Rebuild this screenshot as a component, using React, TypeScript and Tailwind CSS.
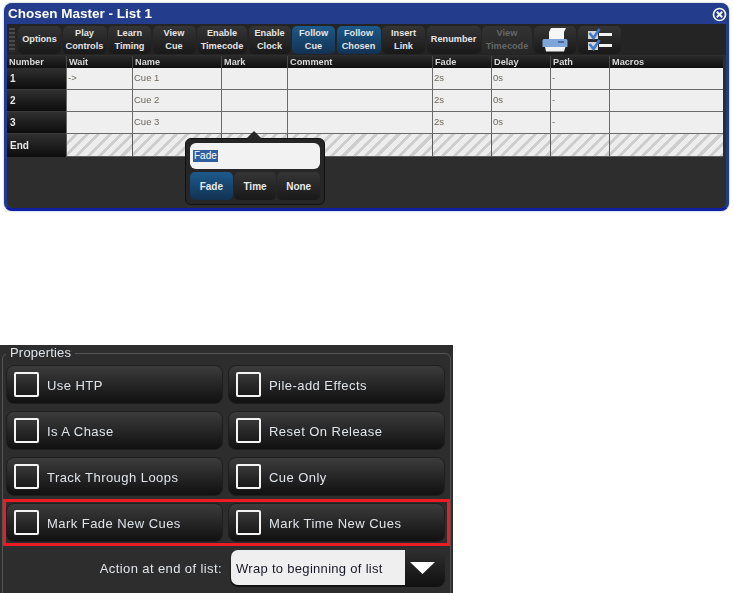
import React from "react";

const font = { fontFamily: '"Liberation Sans", Arial, sans-serif' };

type TB = { w: string; a: string; b?: string; blue?: boolean; off?: boolean };
const tools: TB[] = [
  { w: "w-[43px]", a: "Options" },
  { w: "w-[44px]", a: "Play", b: "Controls" },
  { w: "w-[43px]", a: "Learn", b: "Timing" },
  { w: "w-[43px]", a: "View", b: "Cue" },
  { w: "w-[50px]", a: "Enable", b: "Timecode" },
  { w: "w-[42px]", a: "Enable", b: "Clock" },
  { w: "w-[43px]", a: "Follow", b: "Cue", blue: true },
  { w: "w-[44px]", a: "Follow", b: "Chosen", blue: true },
  { w: "w-[43px]", a: "Insert", b: "Link" },
  { w: "w-[54px]", a: "Renumber" },
  { w: "w-[50px]", a: "View", b: "Timecode", off: true },
];

function ToolButton({ t }: { t: TB }) {
  const bg = t.blue
    ? "bg-gradient-to-b from-[#1d5a8c] to-[#123252]"
    : t.off
      ? "bg-gradient-to-b from-[#333333] to-[#262626]"
      : "bg-gradient-to-b from-[#353535] to-[#191919]";
  return (
    <div
      className={`${t.w} ${bg} ${t.off ? "text-[#666666]" : "text-[#e4e4e4]"} h-[28px] shrink-0 rounded-[5px] flex flex-col items-center justify-center text-[9.2px] font-bold leading-[13px]`}
    >
      <span>{t.a}</span>
      {t.b && <span>{t.b}</span>}
    </div>
  );
}

const cols = "grid grid-cols-[59px_66px_89px_66px_145px_59px_59px_59px_114px]";
const heads = ["Number", "Wait", "Name", "Mark", "Comment", "Fade", "Delay", "Path", "Macros"];
const rows = [
  ["1", "->", "Cue 1", "", "", "2s", "0s", "-", ""],
  ["2", "", "Cue 2", "", "", "2s", "0s", "-", ""],
  ["3", "", "Cue 3", "", "", "2s", "0s", "-", ""],
];

function Row({ cells }: { cells: string[] }) {
  return (
    <div className={`${cols} h-[22px]`}>
      {cells.map((c, i) =>
        i === 0 ? (
          <div
            key={i}
            className="bg-gradient-to-b from-[#303030] to-[#0d0d0d] text-[#e8e8e8] font-bold text-[10px] flex items-center pl-[3px] border-b border-[#3a3a3a]"
          >
            {c}
          </div>
        ) : (
          <div
            key={i}
            className="bg-[#efefef] text-[#6e675c] text-[9.5px] flex items-center pl-[1px] border-l border-b border-[#6a6a6a]"
          >
            {c}
          </div>
        ),
      )}
    </div>
  );
}

function PropButton({ label }: { label: string }) {
  return (
    <div className="h-[39px] rounded-[8px] border border-[#1e1e1e] bg-gradient-to-b from-[#3c3c3c] via-[#262626] to-[#111111] flex items-center pl-[7px] gap-[8px]">
      <div className="w-[25px] h-[25px] border-[2px] border-[#f4f4f4] rounded-[2px] bg-gradient-to-b from-[#383838] to-[#1a1a1a] shrink-0" />
      <span className="text-[#dfe4ea] text-[13px] tracking-[0.45px] whitespace-nowrap pt-[2px]">{label}</span>
    </div>
  );
}

export default function App() {
  return (
    <div style={font} className="w-[734px] h-[593px] bg-white overflow-hidden pt-[3px]">
      {/* Cue list window */}
      <div className="relative ml-[4px] w-[725px] h-[208px] rounded-[8px] bg-[#233d8c] border-b-[3px] border-x-[2px] border-b-[#0f1fa0] border-x-[#1f3a96] shadow-[0_0_2px_#8fa0d0] flex flex-col blur-[0.35px]">
        <div className="h-[21px] flex items-center justify-between pl-[2px] pr-0 shrink-0 pt-[2px]">
          <span className="text-white text-[13.5px] font-bold">Chosen Master - List 1</span>
          <svg width="15" height="15" viewBox="0 0 15 15">
            <circle cx="7.5" cy="7.5" r="6" fill="#233d8c" stroke="#f4f4f4" strokeWidth="1.7" />
            <path d="M4.8 4.8 10.2 10.2M10.2 4.8 4.8 10.2" stroke="#f4f4f4" strokeWidth="2" />
          </svg>
        </div>
        <div className="flex-1 bg-[#2d2d2d] rounded-t-[4px] rounded-b-[6px] mx-[1px] flex flex-col min-h-0">
          {/* toolbar */}
          <div className="h-[31px] shrink-0 flex items-center pl-[2px] gap-[1.5px] bg-[#242424]">
            <div className="w-[6px] h-[24px] mr-[1.5px] shrink-0 bg-[repeating-linear-gradient(180deg,#4a4a4a_0px,#4a4a4a_2px,#2a2a2a_2px,#2a2a2a_4px)]" />
            {tools.map((t) => (
              <ToolButton key={t.a + (t.b ?? "")} t={t} />
            ))}
            <div className="w-[42px] h-[28px] shrink-0 rounded-[5px] bg-gradient-to-b from-[#353535] to-[#191919] flex items-center justify-center">
              <svg width="26" height="26" viewBox="0 0 26 26">
                <path d="M9 1h15l-2 4v7H7V5z" fill="#f6f6f6" />
                <path d="M2 12h22a1.500 1.500 0 0 1 1.500 1.500V20H.5v-6.500A1.500 1.500 0 0 1 2 12z" fill="#7ea6dc" />
                <rect x="16" y="14" width="6" height="2" fill="#4a6a9c" />
                <path d="M3 20h20.500l-1.500 4.500H4z" fill="#f2f2f2" />
              </svg>
            </div>
            <div className="w-[43px] h-[28px] shrink-0 ml-[1px] rounded-[5px] bg-gradient-to-b from-[#353535] to-[#191919] flex items-center justify-center">
              <svg width="26" height="24" viewBox="0 0 26 24">
                <rect x="1" y="3" width="10" height="8" fill="#d4d4d4" />
                <rect x="1" y="14" width="10" height="8" fill="#d4d4d4" />
                <path d="M2.500 5l4 5 6-9M2.500 16l4 5 6-9" fill="none" stroke="#3f78c8" strokeWidth="2.600" />
                <rect x="12" y="5" width="13" height="3" fill="#f2f2f2" />
                <rect x="12" y="16" width="13" height="3" fill="#f2f2f2" />
              </svg>
            </div>
          </div>
          {/* table */}
          <div className="flex flex-col mt-[1px]">
            <div className={`${cols} h-[12px] bg-gradient-to-b from-[#2a2a2a] to-[#101010] w-[716px]`}>
              {heads.map((h, i) => (
                <div
                  key={h}
                  className={`text-[#d8d8d8] font-bold text-[9.2px] leading-[12px] pl-[2px] ${i ? "border-l border-[#4a4a4a]" : ""}`}
                >
                  {h}
                </div>
              ))}
            </div>
            {rows.map((r) => (
              <Row key={r[0]} cells={r} />
            ))}
            <div className={`${cols} h-[23px]`}>
              <div className="bg-gradient-to-b from-[#303030] to-[#0d0d0d] text-[#e8e8e8] font-bold text-[10px] flex items-center pl-[3px]">
                End
              </div>
              {heads.slice(1).map((h) => (
                <div
                  key={h}
                  className="border-l border-b border-[#5a5a5a] bg-[repeating-linear-gradient(135deg,#ededed_0px,#ededed_5px,#cdcdcd_5px,#cdcdcd_8px)]"
                />
              ))}
            </div>
          </div>
        </div>
        {/* popup */}
        <div className="absolute left-[179px] top-[135px] w-[140px] h-[67px] rounded-[6px] bg-[#262626] border border-[#111111] p-[4px] flex flex-col gap-[3px]">
          <div className="absolute left-[63px] top-[-6px] w-[10px] h-[10px] rotate-45 bg-[#262626]" />
          <div className="relative h-[27px] rounded-[6px] bg-[#f2f2f2] flex items-center pl-[3px]">
            <span className="bg-[#2d5f9e] text-white text-[10px] font-normal leading-[12px] px-[1px]">Fade</span>
          </div>
          <div className="relative flex gap-[1px]">
            <div className="w-[43px] h-[28px] rounded-[5px] bg-gradient-to-b from-[#1d5a8c] to-[#123252] text-[#e8e8e8] text-[10px] font-bold flex items-center justify-center">
              Fade
            </div>
            <div className="w-[43px] h-[28px] rounded-[5px] bg-gradient-to-b from-[#353535] to-[#191919] text-[#e8e8e8] text-[10px] font-bold flex items-center justify-center">
              Time
            </div>
            <div className="w-[43px] h-[28px] rounded-[5px] bg-gradient-to-b from-[#353535] to-[#191919] text-[#e8e8e8] text-[10px] font-bold flex items-center justify-center">
              None
            </div>
          </div>
        </div>
      </div>

      {/* Properties */}
      <div className="mt-[134px] w-[453px] h-[248px] bg-[#2d2d2d] overflow-hidden px-[2px] pt-[1px] blur-[0.25px]">
        <fieldset className="relative h-[300px] border border-[#555555] rounded-[6px] pl-[3px] pr-[5px]">
          <legend className="ml-0 px-[4px] text-[#dfe4ea] text-[13px] tracking-[0.2px] leading-[14px]">Properties</legend>
          <div className="relative grid grid-cols-[217px_217px] gap-x-[5px] gap-y-[7px] mt-[5px]">
            <PropButton label="Use HTP" />
            <PropButton label="Pile-add Effects" />
            <PropButton label="Is A Chase" />
            <PropButton label="Reset On Release" />
            <PropButton label="Track Through Loops" />
            <PropButton label="Cue Only" />
            <PropButton label="Mark Fade New Cues" />
            <PropButton label="Mark Time New Cues" />
            <div className="absolute left-[-3px] top-[134px] w-[447px] h-[47px] border-[3px] border-[#ed1c24]" />
          </div>
          <div className="flex items-center mt-[6px] h-[39px]">
            <span className="w-[217px] text-right text-[#dfe4ea] text-[13px] tracking-[0.4px] whitespace-nowrap pr-[1px] pt-[2px]">
              Action at end of list:
            </span>
            <div className="ml-[7px] w-[215px] h-[39px] rounded-[8px] bg-gradient-to-b from-[#303030] to-[#111111] flex items-center p-[1px]">
              <div className="w-[174px] h-[35px] rounded-l-[7px] bg-[#efefef] text-[#1a1a2a] text-[13px] tracking-[0.3px] flex items-center pl-[5px] pt-[2px] whitespace-nowrap">
                Wrap to beginning of list
              </div>
              <svg className="ml-[5px]" width="25" height="12" viewBox="0 0 25 12">
                <path d="M0 0h25L12.500 12z" fill="#ffffff" />
              </svg>
            </div>
          </div>
        </fieldset>
      </div>
    </div>
  );
}
